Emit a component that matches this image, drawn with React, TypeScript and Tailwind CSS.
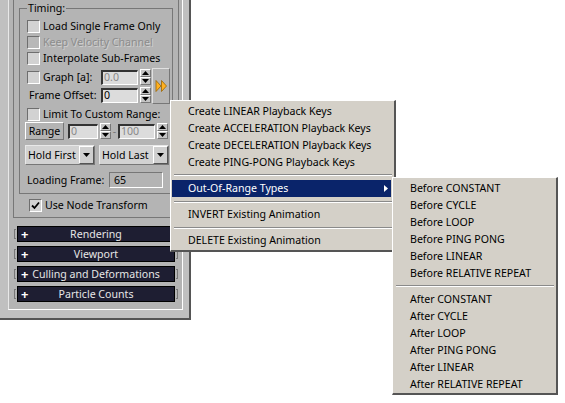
import React from "react";

const Check = ({ on, dim }: { on?: boolean; dim?: boolean }) => (
  <span className={`flex h-[13px] w-[13px] shrink-0 items-center justify-center border-t border-l border-t-[#6e6e6e] border-l-[#6e6e6e] border-r border-b border-r-white border-b-white ${dim ? "bg-[#b8b8b8]" : "bg-[#d2d2d2]"}`}>
    {on && (
      <svg width="9" height="9" viewBox="0 0 9 9"><path d="M1 4.5 L3.5 7 L8 1.5" fill="none" stroke="#000" strokeWidth="1.8" /></svg>
    )}
  </span>
);

const Spin = () => (
  <span className="flex h-[16px] w-[11px] shrink-0 flex-col">
    <span className="flex h-[8px] items-center justify-center border border-t-white border-l-white border-r-[#777] border-b-[#777] bg-[#c4c4c4]">
      <svg width="7" height="4" viewBox="0 0 7 4"><path d="M3.5 0 L7 4 L0 4Z" fill="#000" /></svg>
    </span>
    <span className="flex h-[8px] items-center justify-center border border-t-white border-l-white border-r-[#777] border-b-[#777] bg-[#c4c4c4]">
      <svg width="7" height="4" viewBox="0 0 7 4"><path d="M0 0 L7 0 L3.5 4Z" fill="#000" /></svg>
    </span>
  </span>
);

const Field = ({ v, w, dim }: { v: string; w: string; dim?: boolean }) => (
  <span className={`flex h-[15px] shrink-0 items-center border-t-2 border-l-2 border-t-[#333] border-l-[#333] border-r border-b border-r-white border-b-white bg-[#dcdcdc] pl-[1px] ${w} ${dim ? "text-[#8a8a8a]" : "text-black"}`}>{v}</span>
);

const Row = ({ label, dim }: { label: string; dim?: boolean }) => (
  <div className={`flex h-[16px] items-center gap-[3px] whitespace-nowrap ${dim ? "text-[#8c8c8c] [text-shadow:1px_1px_0_#d0d0d0]" : "text-black"}`}>
    <Check dim={dim} />
    <span>{label}</span>
  </div>
);

const Hold = ({ label }: { label: string }) => (
  <span className="flex h-[20px] w-[70px] items-center justify-between whitespace-nowrap border-t border-l border-t-[#e8e8e8] border-l-[#e8e8e8] border-r border-b border-r-[#777] border-b-[#777] bg-[#d2d2d2] pl-[2px]">
    {label}
    <span className="flex h-[18px] w-[15px] items-center justify-center border border-t-white border-l-white border-r-[#555] border-b-[#555] bg-[#cfcfcf]">
      <svg width="7" height="4" viewBox="0 0 7 4"><path d="M0 0 L7 0 L3.5 4Z" fill="#000" /></svg>
    </span>
  </span>
);

const Roll = ({ label }: { label: string }) => (
  <div className="flex items-center gap-[1px]">
    <span className="h-[10px] w-[2px] border-t border-l border-b border-[#777]" />
    <div className="relative flex h-[16px] w-[158px] items-center justify-center whitespace-nowrap border border-black bg-[#1e1e32] text-[#e6e6e6]">
      <span className="absolute left-[3px] text-[13px] font-bold text-white">+</span>
      {label}
    </div>
    <span className="h-[10px] w-[2px] border-t border-r border-b border-[#777]" />
  </div>
);

const Item = ({ t }: { t: string }) => <div className="flex h-[17px] items-center whitespace-nowrap text-black">{t}</div>;
const Sep = () => <div className="mx-[2px] h-[2px] border-t border-b border-t-[#8a8a8a] border-b-white" />;

export default function App() {
  return (
    <div className="relative h-[403px] w-[565px] overflow-hidden bg-white text-[10.6px] leading-none text-black" style={{ fontFamily: '"Noto Sans", sans-serif' }}>
      {/* Outer window frame */}
      <div className="w-[191px] border-r-2 border-b-2 border-r-[#555] border-b-[#555] bg-[#c0c0c0] pb-[8px] pl-[8px] pr-[6px]">
        {/* Inner frame */}
        <div className="border-l border-r border-b border-l-[#e8e8e8] border-r-white border-b-white bg-[#b4b4b4] pb-[7px] pl-[4px] pr-[4px]">
          {/* Rollout */}
          <div className="w-[166px] border-l border-r border-b border-[#777] pb-[5px] pl-[5px] pt-[8px]">
            <div className="relative w-[154px] border border-[#777] pb-[5px] pl-[5px] pt-[9px]">
              <span className="absolute -top-[6px] left-[7px] bg-[#b4b4b4] px-[1px]">Timing:</span>
              <div className="pl-[2px]">
                <Row label="Load Single Frame Only" />
                <Row label="Keep Velocity Channel" dim />
                <Row label="Interpolate Sub-Frames" />
              </div>
              <div className="mt-[2px] flex items-start">
                <div className="w-[127px]">
                  <div className="flex h-[18px] items-center pl-[2px]">
                    <div className="w-[74px]"><Row label="Graph [a]:" /></div>
                    <span className="flex items-center gap-[2px]"><Field v="0.0" w="w-[37px]" dim /><Spin /></span>
                  </div>
                  <div className="flex h-[18px] items-center">
                    <span className="w-[76px] whitespace-nowrap pl-[4px]">Frame Offset:</span>
                    <span className="flex items-center gap-[2px]"><Field v="0" w="w-[37px]" /><Spin /></span>
                  </div>
                </div>
                <span className="flex h-[36px] w-[18px] items-center justify-center border border-t-[#e0e0e0] border-l-[#e0e0e0] border-r-[#777] border-b-[#777]">
                  <svg width="13" height="12" viewBox="0 0 13 12"><path d="M1 0.5 L6 6 L1 11.5Z M6.5 0.5 L11.5 6 L6.5 11.5Z" fill="#ffb020" stroke="#9a6400" strokeWidth="0.8" /></svg>
                </span>
              </div>
              <div className="mt-[2px] pl-[2px]"><Row label="Limit To Custom Range:" /></div>
              <div className="flex items-center">
                <span className="flex h-[18px] w-[39px] items-center justify-center border border-t-white border-l-white border-r-[#777] border-b-[#777]">Range</span>
                <span className="ml-[4px]"><Field v="0" w="w-[30px]" dim /></span>
                <span className="ml-[2px]"><Spin /></span>
                <span className="w-[7px] text-center text-[#777]">-</span>
                <Field v="100" w="w-[37px]" dim />
                <span className="ml-[2px]"><Spin /></span>
              </div>
              <div className="mt-[5px] flex gap-[4px]">
                <Hold label="Hold First" />
                <Hold label="Hold Last" />
              </div>
              <div className="mt-[7px] flex items-center pl-[2px]">
                <span className="w-[82px] whitespace-nowrap">Loading Frame:</span>
                <span className="flex h-[16px] w-[54px] items-center border-t border-l border-t-[#777] border-l-[#777] border-r border-b border-r-white border-b-white pl-[4px]">65</span>
              </div>
            </div>
            <div className="mt-[4px] flex h-[14px] items-center gap-[3px] whitespace-nowrap pl-[10px]">
              <Check on />
              <span>Use Node Transform</span>
            </div>
          </div>
          <div className="mt-[8px] flex flex-col gap-[4px] pl-[1px]">
            <Roll label="Rendering" />
            <Roll label="Viewport" />
            <Roll label="Culling and Deformations" />
            <Roll label="Particle Counts" />
          </div>
        </div>
      </div>

      {/* Main popup menu */}
      <div className="absolute left-[170px] top-[100px] w-[226px] border-t border-l border-t-white border-l-white border-r-2 border-b-2 border-r-[#555] border-b-[#555] bg-[#d4d0c8] pb-[1px] pl-[1px] pt-[2px]">
        <div className="pl-[16px]">
          <Item t="Create LINEAR Playback Keys" />
          <Item t="Create ACCELERATION Playback Keys" />
          <Item t="Create DECELERATION Playback Keys" />
          <Item t="Create PING-PONG Playback Keys" />
        </div>
        <div className="mt-[3px] mb-[4px]"><Sep /></div>
        <div className="relative flex h-[17px] w-[219px] items-center bg-[#0a246a] pl-[16px] text-white">
          Out-Of-Range Types
          <svg className="absolute right-[3px]" width="4" height="7" viewBox="0 0 4 7"><path d="M0 0 L4 3.5 L0 7Z" fill="#fff" /></svg>
        </div>
        <div className="mt-[4px] mb-[3px]"><Sep /></div>
        <div className="pl-[16px]"><Item t="INVERT Existing Animation" /></div>
        <div className="mt-[4px] mb-[3px]"><Sep /></div>
        <div className="pl-[16px]"><Item t="DELETE Existing Animation" /></div>
      </div>

      {/* Submenu */}
      <div className="absolute left-[392px] top-[177px] w-[166px] border-t border-l border-t-white border-l-white border-r-2 border-b-2 border-r-[#555] border-b-[#555] bg-[#d4d0c8] pl-[1px] pt-[2px]">
        <div className="pl-[16px]">
          {["Before CONSTANT", "Before CYCLE", "Before LOOP", "Before PING PONG", "Before LINEAR", "Before RELATIVE REPEAT"].map((t) => <Item key={t} t={t} />)}
        </div>
        <div className="mt-[3px] mb-[4px]"><Sep /></div>
        <div className="pl-[16px]">
          {["After CONSTANT", "After CYCLE", "After LOOP", "After PING PONG", "After LINEAR", "After RELATIVE REPEAT"].map((t) => <Item key={t} t={t} />)}
        </div>
      </div>
    </div>
  );
}
